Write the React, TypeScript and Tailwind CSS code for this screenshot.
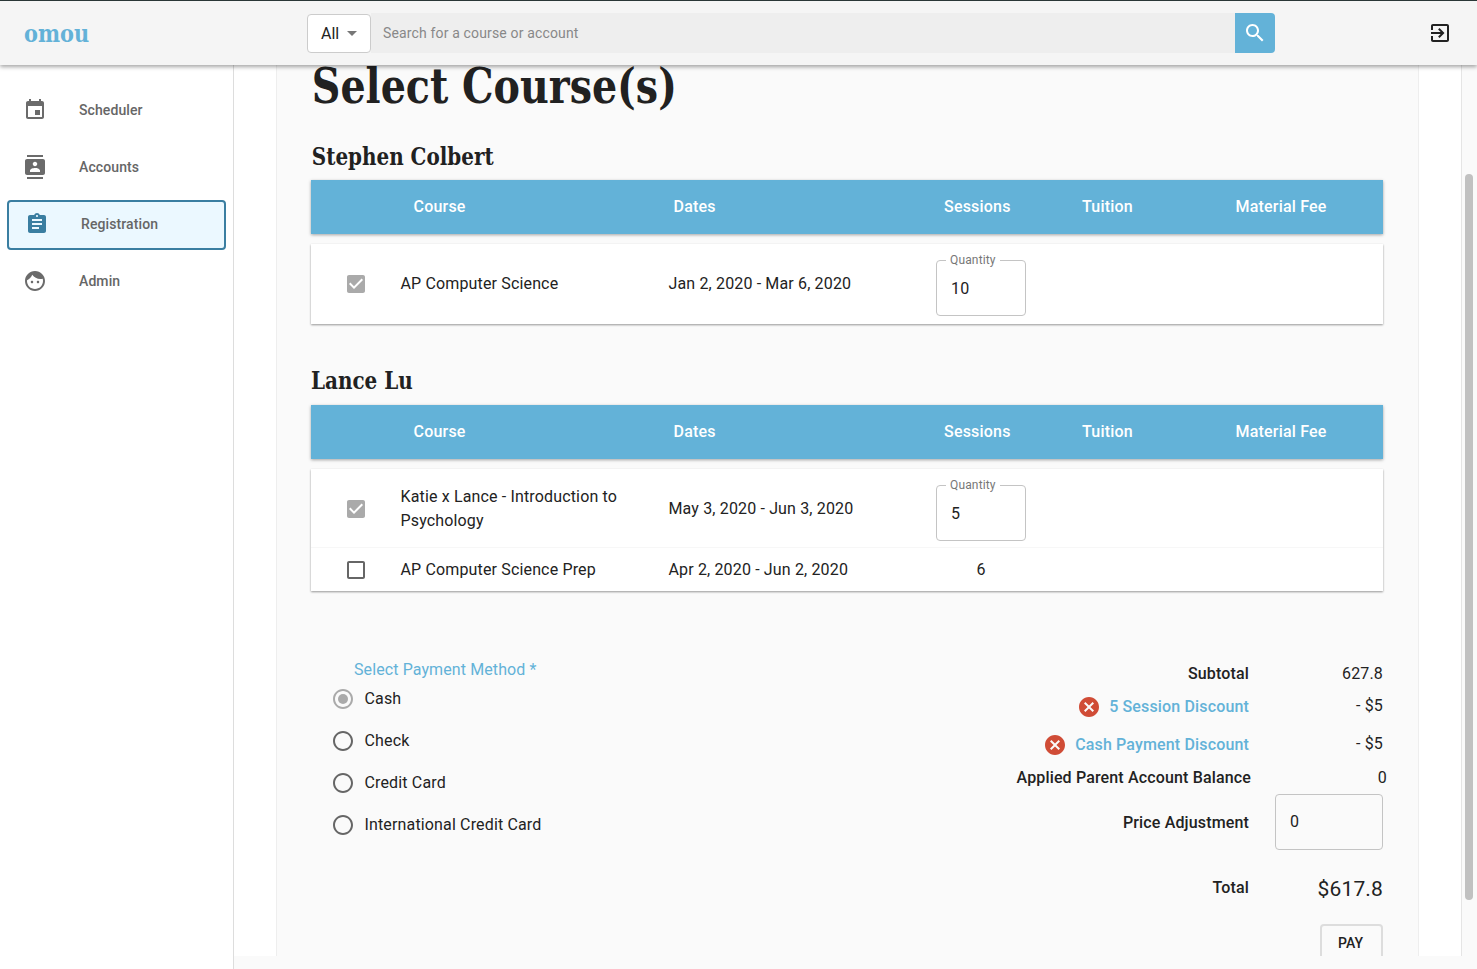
import React from "react";

const P = {
  event: "M17 12h-5v5h5v-5zM16 1v2H8V1H6v2H5c-1.11 0-1.99.9-1.99 2L3 19c0 1.1.89 2 2 2h14c1.1 0 2-.9 2-2V5c0-1.1-.9-2-2-2h-1V1h-2zm3 18H5V8h14v11z",
  contacts: "M20 0H4v2h16V0zM4 24h16v-2H4v2zM20 4H4c-1.1 0-2 .9-2 2v12c0 1.1.9 2 2 2h16c1.1 0 2-.9 2-2V6c0-1.1-.9-2-2-2zm-8 2.75c1.24 0 2.25 1.01 2.25 2.25s-1.01 2.25-2.25 2.25S9.75 10.24 9.75 9 10.76 6.75 12 6.75zM17 17H7v-1.5c0-1.67 3.33-2.5 5-2.5s5 .83 5 2.5V17z",
  assignment: "M19 3h-4.18C14.4 1.84 13.3 1 12 1c-1.3 0-2.4.84-2.82 2H5c-1.1 0-2 .9-2 2v14c0 1.1.9 2 2 2h14c1.1 0 2-.9 2-2V5c0-1.1-.9-2-2-2zm-7 0c.55 0 1 .45 1 1s-.45 1-1 1-1-.45-1-1 .45-1 1-1zm2 14H7v-2h7v2zm3-4H7v-2h10v2zm0-4H7V7h10v2z",
  face: "M9 11.75c-.69 0-1.25.56-1.25 1.25s.56 1.25 1.25 1.25 1.25-.56 1.25-1.25-.56-1.25-1.25-1.25zm6 0c-.69 0-1.25.56-1.25 1.25s.56 1.25 1.25 1.25 1.25-.56 1.25-1.25-.56-1.25-1.25-1.25zM12 2C6.48 2 2 6.48 2 12s4.48 10 10 10 10-4.48 10-10S17.52 2 12 2zm0 18c-4.41 0-8-3.59-8-8 0-.29.02-.58.05-.86 2.36-1.05 4.23-2.98 5.21-5.37C11.07 8.33 14.05 10 17.42 10c.78 0 1.53-.09 2.25-.26.21.71.33 1.47.33 2.26 0 4.41-3.59 8-8 8z",
  exit: "M10.09 15.59L11.5 17l5-5-5-5-1.41 1.41L12.67 11H3v2h9.67l-2.58 2.59zM19 3H5c-1.11 0-2 .9-2 2v4h2V5h14v14H5v-4H3v4c0 1.1.89 2 2 2h14c1.1 0 2-.9 2-2V5c0-1.1-.9-2-2-2z",
  search: "M15.5 14h-.79l-.28-.27C15.41 12.59 16 11.11 16 9.5 16 5.91 13.09 3 9.5 3S3 5.91 3 9.5 5.91 16 9.5 16c1.61 0 3.09-.59 4.23-1.57l.27.28v.79l5 4.99L20.49 19l-4.99-5zm-6 0C7.01 14 5 11.99 5 9.5S7.01 5 9.5 5 14 7.01 14 9.5 11.99 14 9.5 14z",
  cancel: "M12 2C6.47 2 2 6.47 2 12s4.47 10 10 10 10-4.47 10-10S17.53 2 12 2zm5 13.59L15.59 17 12 13.41 8.41 17 7 15.59 10.59 12 7 8.41 8.41 7 12 10.59 15.59 7 17 8.41 13.41 12 17 15.59z",
  checked: "M19 3H5c-1.11 0-2 .9-2 2v14c0 1.1.89 2 2 2h14c1.11 0 2-.89 2-2V5c0-1.11-.89-2-2-2zm-9 14l-5-5 1.41-1.41L10 14.17l7.59-7.59L19 8l-9 9z",
  unchecked: "M19 5v14H5V5h14m0-2H5c-1.1 0-2 .9-2 2v14c0 1.1.9 2 2 2h14c1.1 0 2-.9 2-2V5c0-1.1-.9-2-2-2z",
  radio: "M12 2C6.48 2 2 6.48 2 12s4.48 10 10 10 10-4.48 10-10S17.52 2 12 2zm0 18c-4.42 0-8-3.58-8-8s3.58-8 8-8 8 3.58 8 8-3.58 8-8 8z",
};

function Icon({ d, className, children }: { d?: string; className?: string; children?: React.ReactNode }) {
  return (
    <svg viewBox="0 0 24 24" fill="currentColor" className={"shrink-0 " + (className ?? "w-6 h-6")}>
      {d && <path d={d} />}
      {children}
    </svg>
  );
}

function NavItem({ d, label, active }: { d: string; label: string; active?: boolean }) {
  return (
    <div
      className={
        "flex items-center gap-8 ml-[7px] w-[219px] h-[50px] pl-4 text-sm font-medium text-[#666] tracking-[0.1px] " +
        (active ? "border-2 border-[#3a7ea1] bg-[#ebf8ff] rounded mt-px -mb-px pb-[2px]" : "")
      }
    >
      <Icon d={d} className={"w-6 h-6 " + (active ? "text-[#3a7ea1]" : "text-[#6b6b6b]")} />
      <span>{label}</span>
    </div>
  );
}

function TableHead() {
  return (
    <div className="grid grid-cols-[102.5px_260px_270.5px_138px_153.5px_1fr] items-center h-[54px] bg-[#63b2d8] text-white font-medium text-base tracking-[0.2px] shadow-[0_1px_3px_rgba(0,0,0,0.35)]">
      <span />
      <span>Course</span>
      <span>Dates</span>
      <span>Sessions</span>
      <span>Tuition</span>
      <span>Material Fee</span>
    </div>
  );
}

function Qty({ value }: { value: string }) {
  return (
    <div className="relative mt-2 w-[90px] h-14 border border-[#c4c4c4] rounded flex items-center pl-[14px] pt-[2px] text-base text-[#222] tracking-[0.15px]">
      <span className="absolute -top-[8px] left-[9px] bg-white px-1 text-xs leading-[15px] text-[#777]">Quantity</span>
      <span>{value}</span>
    </div>
  );
}

function Row({ checked, course, dates, qty, sessions, className }: { checked: boolean; course: React.ReactNode; dates: string; qty?: string; sessions?: string; className: string }) {
  return (
    <div className={"grid grid-cols-[90px_268px_267px_90px] items-center text-base leading-6 text-[#222] tracking-[0.15px] " + className}>
      <div className="flex justify-center">
        <Icon d={checked ? P.checked : P.unchecked} className={"w-6 h-6 " + (checked ? "text-[#aaa]" : "text-[#666]")} />
      </div>
      <div className="-ml-[0.5px]">{course}</div>
      <div className="-ml-[0.5px]">{dates}</div>
      {qty ? <Qty value={qty} /> : <div className="text-center">{sessions}</div>}
    </div>
  );
}

function Radio({ label, on }: { label: string; on?: boolean }) {
  return (
    <div className="flex items-center gap-[9.5px] h-[42px] text-base text-[#222] tracking-[0.15px]">
      <Icon d={P.radio} className={"w-6 h-6 " + (on ? "text-[#aaa]" : "text-[#666]")}>
        {on && <circle cx="12" cy="12" r="5" />}
      </Icon>
      <span>{label}</span>
    </div>
  );
}

function SumRow({ label, value, className, labelClass, valueClass }: { label: React.ReactNode; value: React.ReactNode; className: string; labelClass?: string; valueClass?: string }) {
  return (
    <div className={"flex items-center justify-end " + className}>
      <div className={"flex items-center justify-end font-medium text-base text-[#222] tracking-[0.15px] whitespace-nowrap " + (labelClass ?? "")}>{label}</div>
      <div className={"w-[134px] shrink-0 flex justify-end text-base text-[#222] tracking-[0.15px] " + (valueClass ?? "")}>{value}</div>
    </div>
  );
}

function Discount({ label }: { label: string }) {
  return (
    <>
      <Icon d={P.cancel} className="w-6 h-6 text-[#d04c36] mr-2" />
      <span className="text-[#63b2d8]">{label}</span>
    </>
  );
}

const slab = "font-['DejaVu_Serif',serif] font-bold text-[#212121]";

export default function App() {
  return (
    <div className="h-[969px] w-[1477px] overflow-hidden flex flex-col bg-white font-['Roboto',sans-serif]">
      <div className="h-px shrink-0 bg-[#2c3a3a]" />
      <header className="relative z-10 h-[64px] shrink-0 flex items-center bg-[#f5f5f5] shadow-[0_2px_4px_rgba(0,0,0,0.35)]">
        <div className="w-[307px] pl-6 pt-px">
          <span className="inline-block origin-left scale-x-[0.87] font-['DejaVu_Serif',serif] font-bold text-[24px] text-[#63b2d8]">omou</span>
        </div>
        <div className="flex items-center">
          <div className="flex items-center w-16 h-[39px] bg-white border border-[#ccc] rounded pl-[13px] text-base text-[#222]">
            <span className="pt-px">All</span>
            <svg viewBox="0 0 24 24" fill="#777" className="w-6 h-6 ml-px"><path d="M7 10l5 5 5-5z" /></svg>
          </div>
          <div className="w-[864px] h-10 bg-[#eee] flex items-center pl-3 text-sm text-[#888] tracking-[0.15px]">Search for a course or account</div>
          <div className="w-10 h-10 bg-[#63b2d8] rounded-r flex items-center justify-center text-white">
            <Icon d={P.search} />
          </div>
        </div>
        <Icon d={P.exit} className="w-6 h-6 ml-[153px] text-[#222]" />
      </header>
      <div className="flex flex-1 min-h-0">
        <aside className="w-[234px] shrink-0 border-r border-[#ddd] pt-5 flex flex-col gap-[7px]">
          <NavItem d={P.event} label="Scheduler" />
          <NavItem d={P.contacts} label="Accounts" />
          <NavItem d={P.assignment} label="Registration" active />
          <NavItem d={P.face} label="Admin" />
        </aside>
        <div className="flex-1 min-w-0 flex flex-col">
          <div className="flex-1 min-h-0 flex overflow-hidden">
            <div className="w-[42px] shrink-0" />
            <main className="w-[1143px] shrink-0 bg-[#fafafa] border-x border-[#eee] pl-[34px] pr-[35px] pt-px overflow-hidden">
              <h1 className={"h-10 leading-10 text-[48px] whitespace-nowrap origin-left scale-x-[0.825] pl-px " + slab}>Select Course(s)</h1>
              <h2 className={"mt-[35px] mb-[7px] h-8 leading-8 text-[24px] whitespace-nowrap origin-left scale-x-[0.83] pl-px " + slab}>Stephen Colbert</h2>
              <TableHead />
              <div className="mt-[10px] bg-white shadow-[0_1px_2px_rgba(0,0,0,0.4)]">
                <Row checked course="AP Computer Science" dates="Jan 2, 2020 - Mar 6, 2020" qty="10" className="h-20" />
              </div>
              <h2 className={"mt-[41px] mb-2 h-8 leading-8 text-[24px] whitespace-nowrap origin-left scale-x-[0.83] " + slab}>Lance Lu</h2>
              <TableHead />
              <div className="mt-[10px] bg-white shadow-[0_1px_2px_rgba(0,0,0,0.4)]">
                <Row checked course={<>Katie x Lance - Introduction to<br />Psychology</>} dates="May 3, 2020 - Jun 3, 2020" qty="5" className="h-[79px] pt-[2px] border-b border-[#f7f7f7]" />
                <Row checked={false} course="AP Computer Science Prep" dates="Apr 2, 2020 - Jun 2, 2020" sessions="6" className="h-[43px]" />
              </div>
              <section className="mt-[68px] flex justify-between">
                <div className="pl-5">
                  <div className="ml-[23px] h-[19px] leading-[21px] text-base text-[#63b2d8] tracking-[0.1px]">Select Payment Method *</div>
                  <Radio label="Cash" on />
                  <Radio label="Check" />
                  <Radio label="Credit Card" />
                  <Radio label="International Credit Card" />
                </div>
                <div className="w-[420px] flex flex-col">
                  <SumRow className="mt-[5px] h-5" label="Subtotal" value="627.8" />
                  <SumRow className="mt-[6px] h-[34px]" label={<Discount label="5 Session Discount" />} value="- $5" valueClass="pb-[2px]" />
                  <SumRow className="mt-1 h-[34px]" label={<Discount label="Cash Payment Discount" />} value="- $5" valueClass="pb-[2px]" />
                  <SumRow className="mt-[6px] h-5 -mr-1" label="Applied Parent Account Balance" labelClass="mr-[2px]" value="0" />
                  <div className="mt-[6px] h-14 flex items-center justify-end">
                    <span className="font-medium text-base text-[#222] tracking-[0.15px] mr-[26px] pt-[2px]">Price Adjustment</span>
                    <div className="w-[108px] h-14 border border-[#c4c4c4] rounded flex items-center pl-[14px] text-base text-[#222]">0</div>
                  </div>
                  <SumRow className="mt-6 h-8" label="Total" value="$617.8" labelClass="pb-1" valueClass="text-[21px] tracking-[0.5px]" />
                  <div className="mt-[18px] flex justify-end">
                    <div className="w-[63px] h-[38px] border-2 border-[#ddd] rounded flex items-center justify-center pr-[2px] text-sm font-medium text-[#222]">PAY</div>
                  </div>
                </div>
              </section>
            </main>
            <div className="w-[42px] shrink-0" />
            <div className="w-4 shrink-0 bg-[#fafafa] border-l border-[#e5e5e5] pl-[3px] pt-[109px]">
              <div className="w-2 h-[726px] rounded bg-[#c1c1c1]" />
            </div>
          </div>
          <div className="h-[13px] shrink-0 bg-[#fafafa]" />
        </div>
      </div>
    </div>
  );
}
